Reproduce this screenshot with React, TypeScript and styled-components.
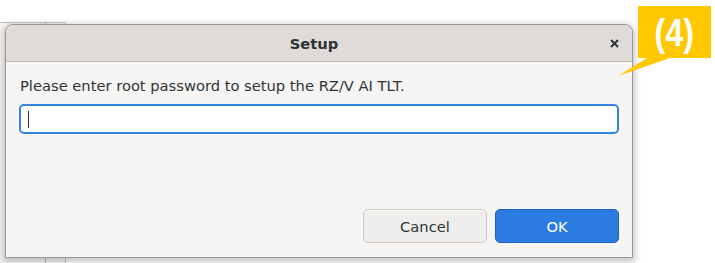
import styled, { createGlobalStyle } from 'styled-components';

const GlobalStyle = createGlobalStyle`
    html, body {
        margin: 0;
        padding: 0;
        background: #ffffff;
    }
    body {
        font-family: "DejaVu Sans", "Noto Sans", sans-serif;
    }
`;

function App() {
    return (
        <Desktop>
            <GlobalStyle />
            <BackWindow />
            <Dialog>
                <TitleBar>
                    <Title>Setup</Title>
                    <CloseButton aria-label="close">
                        <svg width="9" height="9" viewBox="0 0 9 9">
                            <path d="M1 1 L8 8 M8 1 L1 8" stroke="#2e3436" strokeWidth="2" />
                        </svg>
                    </CloseButton>
                </TitleBar>
                <Body>
                    <Message>Please enter root password to setup the RZ/V AI TLT.</Message>
                    <PasswordField>
                        <Caret />
                    </PasswordField>
                    <Spacer />
                    <ButtonRow>
                        <DialogButton>Cancel</DialogButton>
                        <DialogButton $primary>OK</DialogButton>
                    </ButtonRow>
                </Body>
            </Dialog>
            <Callout>
                <CalloutLabel>(4)</CalloutLabel>
                <CalloutPointer width="100" height="30" viewBox="0 0 100 30">
                    <polygon points="29,0 52,0 0,18" fill="#ffc800" />
                </CalloutPointer>
            </Callout>
        </Desktop>
    );
}

export default App;

const Desktop = styled.div`
    position: relative;
    width: 715px;
    height: 263px;
    overflow: hidden;
    background: #ffffff;
`;

const BackWindow = styled.div`
    position: absolute;
    left: -10px;
    top: 22px;
    width: 74px;
    height: 260px;
    background: #f6f5f4;
    border: 1px solid #c6c3c0;
    border-radius: 6px 0 0 0;
    &::after {
        content: '';
        position: absolute;
        left: 54px;
        top: 0;
        bottom: 0;
        border-left: 1px solid #b9b6b3;
    }
`;

const Dialog = styled.div`
    position: absolute;
    left: 5px;
    top: 24px;
    width: 626px;
    height: 232px;
    display: flex;
    flex-direction: column;
    background: #f6f5f4;
    border: 1px solid #9a9895;
    border-radius: 8px 8px 0 0;
    box-shadow: 0 2px 6px 2px rgba(0, 0, 0, 0.22);
    overflow: hidden;
`;

const TitleBar = styled.div`
    position: relative;
    height: 36px;
    flex: none;
    display: flex;
    align-items: center;
    justify-content: center;
    padding-right: 10px;
    background: #dedbd8;
    border-bottom: 1px solid #bdb9b5;
`;

const Title = styled.span`
    font-family: "DejaVu Sans", sans-serif;
    font-weight: bold;
    font-size: 14.7px;
    color: #2e3436;
`;

const CloseButton = styled.span`
    position: absolute;
    right: 13px;
    top: 14px;
    width: 9px;
    height: 9px;
    display: flex;
`;

const Body = styled.div`
    flex: 1;
    display: flex;
    flex-direction: column;
    padding: 15px 13px 14px 13px;
`;

const Message = styled.div`
    font-family: "DejaVu Sans", sans-serif;
    font-size: 14.7px;
    line-height: 18px;
    color: #2e3436;
    padding-left: 1px;
`;

const PasswordField = styled.div`
    margin-top: 9px;
    height: 26px;
    background: #ffffff;
    border: 2px solid #3584e4;
    border-radius: 5px;
    display: flex;
    align-items: center;
    padding-left: 7px;
`;

const Caret = styled.span`
    width: 1px;
    height: 17px;
    background: #2e3436;
`;

const Spacer = styled.div`
    flex: 1;
`;

const ButtonRow = styled.div`
    display: flex;
    justify-content: flex-end;
    gap: 8px;
`;

const DialogButton = styled.button<{ $primary?: boolean }>`
    width: 124px;
    height: 34px;
    font-family: "DejaVu Sans", sans-serif;
    font-size: 14.7px;
    border-radius: 5px;
    color: ${p => (p.$primary ? '#ffffff' : '#2e3436')};
    background: ${p => (p.$primary ? '#2c7be0' : '#f0eeec')};
    border: 1px solid ${p => (p.$primary ? '#1c63c0' : '#cdc7c2')};
    box-shadow: ${p => (p.$primary ? 'none' : 'inset 0 1px rgba(255,255,255,0.8)')};
    padding: 0;
`;

const Callout = styled.div`
    position: absolute;
    left: 638px;
    top: 6px;
    width: 73px;
    height: 52px;
    background: #ffc800;
    display: flex;
    align-items: center;
    justify-content: center;
`;

const CalloutLabel = styled.span`
    font-family: "Liberation Sans Narrow", "Liberation Sans", sans-serif;
    font-weight: bold;
    font-size: 38px;
    color: #ffffff;
    display: inline-block;
    transform: scaleX(0.85);
    margin-top: 2px;
`;

const CalloutPointer = styled.svg`
    position: absolute;
    left: -20px;
    top: 52px;
    overflow: visible;
`;
